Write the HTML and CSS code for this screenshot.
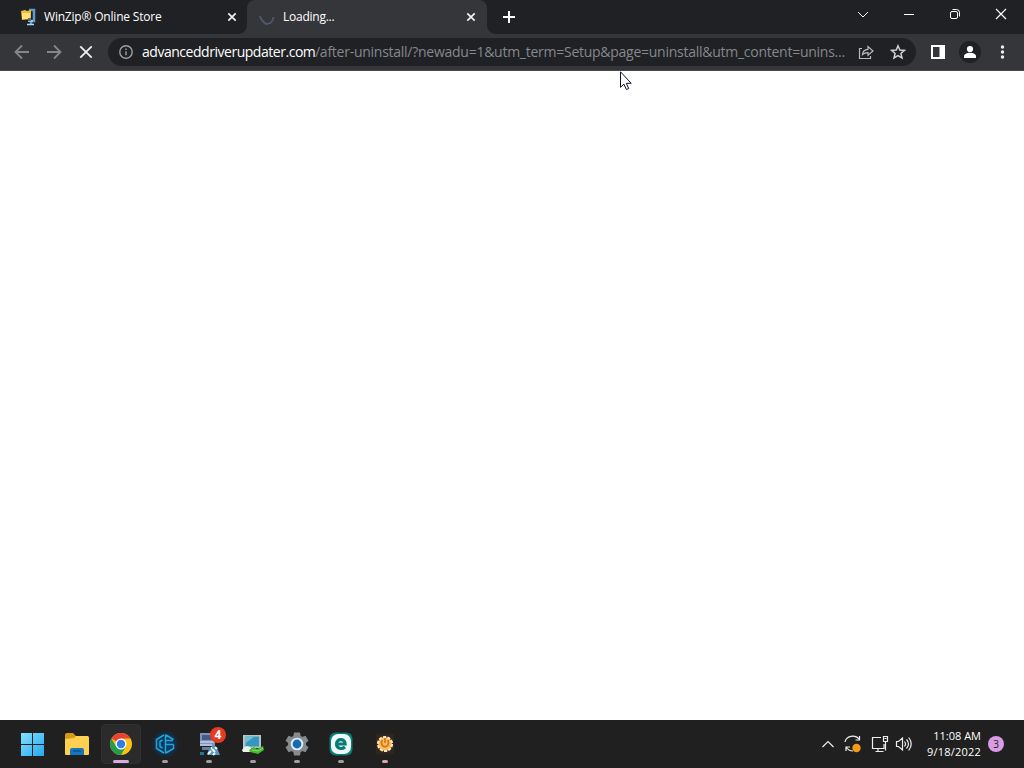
FILE: index.html
```
<!DOCTYPE html>
<html lang="en">
<head>
  <meta charset="utf-8">
  <title>Loading...</title>
  <link rel="stylesheet" href="styles.css">
</head>
<body>
  <div id="desktop">
    <header class="tabstrip">
      <div class="tab">
        <svg class="favicon" width="16" height="18" viewBox="0 0 16 18">
          <path d="M9 2h5v11h-3v3" fill="none" stroke="#5b9bd0" stroke-width="2.5"/>
          <path d="M7 16.500h7M8 13h5" stroke="#b8d5e8" stroke-width="1.500"/>
          <path d="M1 3l4-1 2 1 4-1v9L2 12z" fill="#f0bd32"/>
          <path d="M2 5h8v6H2z" fill="#ffe17b"/>
          <path d="M8 10h3v3H8z" fill="#526f80"/>
        </svg>
        <span class="tab-title winzip">WinZip® Online Store</span>
        <svg class="tab-close" width="10" height="10" viewBox="0 0 10 10"><path d="M1.3 1.3l7.4 7.4M8.7 1.3L1.3 8.7"/></svg>
      </div>
      <div class="tab active">
        <svg class="favicon" width="16" height="18" viewBox="0 0 16 18"><path d="M1 8c1 4 3 6 6 8 4 0 7-2 7.500-7" fill="none" stroke="#50586b" stroke-width="1.800"/></svg>
        <span class="tab-title loading">Loading...</span>
        <svg class="tab-close" width="10" height="10" viewBox="0 0 10 10"><path d="M1.3 1.3l7.4 7.4M8.7 1.3L1.3 8.7"/></svg>
      </div>
      <svg class="new-tab" width="44" height="34" viewBox="0 0 44 34"><path d="M22 11v12M16 17h12" stroke="#fff" stroke-width="2"/></svg>
      <div class="window-buttons">
        <svg viewBox="0 0 46 29"><path d="M18 12l5 5 5-5"/></svg>
        <svg viewBox="0 0 46 29"><path d="M18 14.500h10"/></svg>
        <svg viewBox="0 0 46 29"><rect x="18.500" y="11.500" width="7" height="7" rx="1.500"/><path d="M20.500 9.500h4q3 0 3 3v4"/></svg>
        <svg viewBox="0 0 46 29"><path d="M18 9l10 10M28 9L18 19" stroke-width="1.200"/></svg>
      </div>
    </header>

    <nav class="toolbar">
      <svg class="tool dim" viewBox="0 0 32 36"><path d="M23 18H9.500M16 11.500L9.500 18l6.500 6.500"/></svg>
      <svg class="tool dim" viewBox="0 0 32 36"><path d="M9 18h13.500M16 11.500l6.500 6.500-6.500 6.500"/></svg>
      <svg class="tool" viewBox="0 0 32 36"><path d="M10.300 12.300l11.400 11.400M21.700 12.300L10.300 23.700"/></svg>
      <div class="omnibox">
        <svg class="info" width="14" height="14" viewBox="0 0 14 14"><circle cx="7" cy="7" r="6.200"/><path d="M7 6.300v4M7 3.500v1.500"/></svg>
        <div class="url"><span class="domain">advanceddriverupdater.com</span><span class="path">/after-uninstall/?newadu=1&amp;utm_term=Setup&amp;page=uninstall&amp;utm_content=unins...</span></div>
        <svg class="share" width="16" height="16" viewBox="0 0 16 16"><path d="M4 4.500H1.500v10h11V12M4.500 10.500c.3-3.200 2-5 5.500-5.200V2.500l5 4.500-5 4.300V8.700c-2.500 0-4 .5-5.500 1.800z"/></svg>
        <svg class="star" width="16" height="16" viewBox="0 0 16 16"><path d="M8 1.800l1.800 4.200 4.600.4-3.500 3 1.100 4.500L8 11.500l-4 2.400 1.100-4.500-3.500-3 4.600-.4z"/></svg>
      </div>
      <svg class="tool panel" viewBox="0 0 32 36"><path d="M9 11h14v14H9zm2 2v10h6.500V13z" fill="#fff" fill-rule="evenodd" stroke="none"/></svg>
      <svg class="tool" viewBox="0 0 32 36"><g stroke="none"><circle cx="16" cy="18" r="11" fill="#202124"/><circle cx="16" cy="15" r="3.100" fill="#fff"/><path d="M10 24v-1.500c0-5 12-5 12 0V24z" fill="#fff"/></g></svg>
      <svg class="tool" viewBox="0 0 32 36"><g fill="#eee" stroke="none"><circle cx="16.500" cy="13" r="1.700"/><circle cx="16.500" cy="18" r="1.700"/><circle cx="16.500" cy="23" r="1.700"/></g></svg>
    </nav>

    <main class="page"></main>

    <footer class="taskbar">
      <div class="apps">
        <div class="app">
          <svg viewBox="0 0 28 28"><defs><linearGradient id="win" x2="1" y2="1"><stop stop-color="#83dfff"/><stop offset="1" stop-color="#24a9ef"/></linearGradient></defs><path d="M2 3h11v11H2zm12 0h11v11H14zM2 15h11v11H2zm12 0h11v11H14z" fill="url(#win)"/></svg>
        </div>
        <div class="app">
          <svg viewBox="0 0 28 28"><path d="M2 5q0-2 2-2h6l3 3h11q2 0 2 2v7H2z" fill="#d99b16"/><path d="M2 9l9-1 2-2h11q2 0 2 2v16q0 1-1 1H3q-1 0-1-1z" fill="#ffd153"/><path d="M7 25v-5q0-2 2-2h10q2 0 2 2v5z" fill="#1476bd"/><path d="M10 21h8" stroke="#075490" stroke-width="1.500"/></svg>
        </div>
        <div class="app selected">
          <svg viewBox="0 0 28 28"><circle cx="14" cy="14" r="11" fill="#fbc116"/><path d="M14 14L4.470 8.500A11 11 0 0 1 23.530 8.500H14z" fill="#e94335"/><path d="M4.470 8.500A11 11 0 0 0 14 25l4.760-8.250L14 14l-4.760 2.750z" fill="#269c4b"/><circle cx="14" cy="14" r="5.500" fill="#fff"/><circle cx="14" cy="14" r="4.200" fill="#327be8"/></svg>
          <i class="running"></i>
        </div>
        <div class="app">
          <svg viewBox="0 0 28 28"><defs><radialGradient id="glow"><stop offset=".5" stop-color="#063b66"/><stop offset="1" stop-color="#063b66" stop-opacity="0"/></radialGradient></defs><circle cx="14" cy="14" r="14" fill="url(#glow)"/><path d="M13 5L5.500 9.500v9L13 23M14.500 4.500v19M15 5l7.500 4.500M15 23l7.500-4.500v-4M15 10.500h7M15 14.500h7.500M11.500 10L9 11.500v5l2.500 1.500" fill="none" stroke="#28a3d4" stroke-width="1.500"/></svg>
          <i class="running"></i>
        </div>
        <div class="app">
          <svg viewBox="0 0 28 28"><path d="M5 3h15v13H5z" fill="#8093ba"/><path d="M7 5h10v5H7z" fill="#465987"/><path d="M5 12h14M5 15h12" stroke="#c4d0e5" stroke-width="1.500"/><path d="M7 17h9v3H7z" fill="#657da9"/><path d="M12 25l2-6 4-4 4 3 3 7z" fill="#5797be"/><path d="M13 24l3-3M17 19l3 3M20 17l2 2M18 25l2-2M16 18h1" stroke="#edf9ff" stroke-width="2"/><path d="M5 22h4v3H5z" fill="#28729e"/></svg>
          <b class="alert-count">4</b>
          <i class="running"></i>
        </div>
        <div class="app">
          <svg viewBox="0 0 28 28"><path d="M4 5h18v13H4z" fill="#b5c4ca"/><path d="M6.500 6.500h13.500v10H6.500z" fill="#3597c0"/><path d="M6.500 6.500h9L6.500 13z" fill="#78becf"/><path d="M3 20l2-3 4-1 3 2 2 3-1 1H4z" fill="#e9f5e8"/><path d="M10 20l5-3 3 2 6-3 1 4-6 4-8-2z" fill="#44b82f"/><path d="M13 20l6 1 5-3" fill="none" stroke="#8cdf5d"/></svg>
          <i class="running"></i>
        </div>
        <div class="app">
          <svg viewBox="0 0 28 28"><g fill="#858a8e"><path d="M11 2.500h6l1 6h-8zM10 19.500h8l-1 6h-6z"/><path d="M11 2.500h6l1 6h-8zM10 19.500h8l-1 6h-6z" transform="rotate(60 14 14)"/><path d="M11 2.500h6l1 6h-8zM10 19.500h8l-1 6h-6z" transform="rotate(120 14 14)"/><circle cx="14" cy="14" r="9"/></g><circle cx="14" cy="14" r="6.300" fill="#e1edf5"/><circle cx="14" cy="14" r="4.400" fill="#166bb0"/></svg>
          <i class="running"></i>
        </div>
        <div class="app">
          <svg viewBox="0 0 28 28"><rect x="2.500" y="2.500" width="23" height="23" rx="6" fill="#087b75"/><rect x="4" y="4" width="20" height="20" rx="7" fill="#eefafa"/><path d="M9.500 14h8.700c0-5.800-8.700-5.800-8.700 0 0 5 5.500 5.500 8.500 3" fill="none" stroke="#087b75" stroke-width="3.100"/></svg>
          <i class="running"></i>
        </div>
        <div class="app">
          <svg viewBox="0 0 28 28"><path d="M5 4h18v20H5z" fill="#30261e"/><circle cx="14" cy="14" r="7" fill="#f5b64f" stroke="#ffe7ba" stroke-width="2.200" stroke-dasharray="3.100 1.300"/><circle cx="14" cy="14" r="5.500" fill="#f7bd5c"/><path d="M11 10c-3 9 9 9 6 0M14 8v5" fill="none" stroke="#d8781e" stroke-width="1.800"/></svg>
          <i class="running pink"></i>
        </div>
      </div>
      <div class="tray">
        <svg class="chevron" width="14" height="10" viewBox="0 0 14 10"><path d="M1.500 8L7 2.500 12.500 8"/></svg>
        <svg class="sync" width="20" height="20" viewBox="0 0 20 20"><path d="M2 8c1-6 10-8 14-3M16.500 2v4h-4M3 17v-4h4M3 13c2 3 4 4 7 4"/><circle class="sync-dot" cx="13.500" cy="14" r="4.200"/></svg>
        <svg class="network" width="18" height="18" viewBox="0 0 18 18"><path d="M10 2.500H1.500v11H13V9M4.500 16.500h8M7 14v2M12.500 1.500h4v5h-4zM14.500 6.500v9M13.500 3.500h2"/></svg>
        <svg class="volume" width="18" height="16" viewBox="0 0 18 16"><path d="M1.500 5.500h2L7.500 2v12l-4-3.500h-2zM9.500 5.500q2 2.500 0 5M11.500 3.500q4 4.500 0 9M13.700 1.500q5 6.500 0 13"/></svg>
        <div class="clock"><span class="time">11:08 AM</span><span class="date">9/18/2022</span></div>
        <span class="notifications">3</span>
      </div>
    </footer>

    <svg class="cursor" width="13" height="20" viewBox="0 0 13 20"><path d="M.5.800v15.500l3.400-3.200 2.500 5.400 2.300-1-2.400-5.200h4.900z" fill="#fff" stroke="#111526"/></svg>
  </div>
</body>
</html>
```
FILE: styles.css
```
*, *:before, *:after { box-sizing: border-box; }
html, body { height: 100%; }
body { margin: 0; overflow: hidden; font-family: "Open Sans", "Noto Sans", sans-serif; color: #fff; }
svg { display: block; flex: none; }

#desktop { position: relative; display: flex; flex-direction: column; height: 100%; background: #fff; }

/* tabs */
.tabstrip { display: flex; height: 34px; background: #202124; }
.tab { position: relative; display: flex; align-items: center; width: 247px; padding: 0 10px 0 20px; }
.tab.active { width: 240px; padding-left: 12px; padding-right: 11px; background: #35363a; border-radius: 8px 8px 0 0; }
.tab.active:before, .tab.active:after {
  content: "";
  position: absolute;
  bottom: 0;
  width: 8px;
  height: 8px;
}
.tab.active:before { left: -8px; background: radial-gradient(circle at 0 0, transparent 7.5px, #35363a 8px); }
.tab.active:after { right: -8px; background: radial-gradient(circle at 100% 0, transparent 7.5px, #35363a 8px); }
.tab-title { margin-left: 8px; font-size: 12px; line-height: 18px; white-space: nowrap; }
.winzip { letter-spacing: -0.2px; }
.loading { letter-spacing: -0.25px; }
.tab-close { margin-left: auto; fill: none; stroke: #f1f1f1; stroke-width: 1.7; }
.window-buttons { display: flex; margin-left: auto; }
.window-buttons svg { width: 46px; height: 29px; fill: none; stroke: #fff; stroke-width: 1; }

/* toolbar */
.toolbar { display: flex; align-items: center; height: 37px; padding: 0 6px 1px; background: #35363a; border-bottom: 1px solid #49494b; }
.tool { width: 32px; height: 36px; fill: none; stroke: #f1f1f1; stroke-width: 1.8; }
.tool.dim { stroke: #85868a; }
.omnibox { display: flex; align-items: center; width: 808px; height: 28px; margin: 0 6px; padding: 0 10px 0 11px; border-radius: 14px; background: #202124; }
.info { fill: none; stroke: #9aa0a6; stroke-width: 1.4; }
.url { display: flex; width: 704px; margin-left: 9px; font-size: 14px; line-height: 20px; white-space: nowrap; }
.domain { width: 173px; letter-spacing: -0.47px; }
.path { color: #85888d; letter-spacing: -0.26px; }
.share { margin-left: 12px; fill: none; stroke: #b9bbbe; stroke-width: 1.2; }
.star { margin-left: 16px; fill: none; stroke: #d0d1d3; stroke-width: 1.5; }

.page { flex: 1; background: #fff; }

/* taskbar */
.taskbar { display: flex; justify-content: space-between; height: 48px; background: #202020; }
.apps { display: flex; align-items: center; padding-left: 11px; }
.app { position: relative; display: flex; align-items: center; justify-content: center; width: 44px; height: 48px; }
.app svg { width: 28px; height: 28px; }
.selected:before { content: ""; position: absolute; inset: 4px 2px; border: 1px solid #303030; border-radius: 4px; background: #2b2b2b; }
.selected svg { position: relative; }
.running { position: absolute; bottom: 5px; width: 6px; height: 3px; border-radius: 2px; background: #a09e9f; }
.selected .running { width: 16px; background: #dba9df; }
.running.pink { background: #dda5a8; }
.alert-count { position: absolute; left: 23px; top: 7px; width: 16px; height: 16px; border-radius: 50%; background: #e63a23; font-size: 12px; line-height: 16px; text-align: center; }

/* system tray */
.tray { display: flex; align-items: center; padding-right: 20px; }
.tray svg { fill: none; stroke: #eee; stroke-width: 1.2; }
.tray .sync-dot { fill: #f39a16; stroke: none; }
.sync { margin-left: 8px; }
.network { margin-left: 8px; }
.volume { margin-left: 6px; }
.clock { display: flex; flex-direction: column; align-items: flex-end; width: 68px; font-size: 11px; line-height: 16px; white-space: nowrap; }
.time { letter-spacing: 0; }
.date { letter-spacing: 0.22px; }
.notifications { width: 16px; height: 16px; margin-left: 7px; border-radius: 50%; background: #d99be3; color: #202020; font-size: 10px; line-height: 16px; text-align: center; }

.cursor { position: absolute; left: 620px; top: 71px; }
```
